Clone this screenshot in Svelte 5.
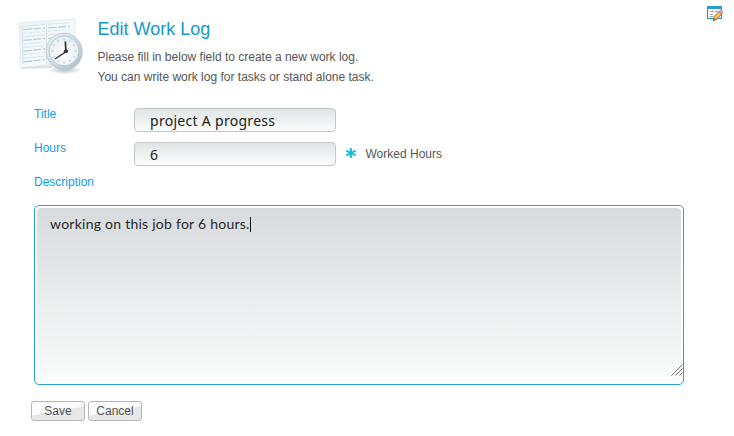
<script>
  let title = $state('project A progress');
  let hours = $state('6');
  const rows = [0, 1, 2, 3, 4, 5, 6, 7, 8, 9, 10];
  const ticks = [0, 30, 60, 90, 120, 150, 180, 210, 240, 270, 300, 330];
</script>

<main>
  <header>
    <svg class="clock" width="68" height="58" viewBox="0 0 68 58">
      <defs>
        <linearGradient id="sheet" x1="0" y1="0" x2="1" y2="1">
          <stop offset="0" stop-color="#edf4f8" />
          <stop offset="1" stop-color="#fbfdfe" />
        </linearGradient>
        <linearGradient id="rim" x1="0" y1="0" x2="1" y2="1">
          <stop offset="0" stop-color="#eaf2f6" />
          <stop offset=".5" stop-color="#d0dde5" />
          <stop offset="1" stop-color="#a5b9c6" />
        </linearGradient>
        <radialGradient id="face" cx=".5" cy=".6" r=".6">
          <stop offset="0" stop-color="#ffffff" />
          <stop offset="1" stop-color="#e3edf3" />
        </radialGradient>
        <radialGradient id="shade">
          <stop offset="0" stop-color="#a6b1b8" stop-opacity=".8" />
          <stop offset="1" stop-color="#a6b1b8" stop-opacity="0" />
        </radialGradient>
      </defs>
      <path d="M2 49.500L34 47V50L4 51Z" fill="#dce1e4" />
      <path d="M1.500 5L57 1V44L2.500 49.500Z" fill="url(#sheet)" stroke="#d9e5ec" stroke-width=".8" />
      {#each rows as r}
        <path d="M5 {8 + r * 3.6}L27 {6.5 + r * 3.5}M30 {6.3 + r * 3.5}L52 {4.8 + r * 3.4}"
          stroke={r % 3 === 1 ? '#b7d0de' : '#d0e1ea'} stroke-width={r % 3 === 1 ? 1.3 : 0.8}
          stroke-dasharray={r % 3 === 1 ? '9 1 8 2' : r % 3 === 2 ? '4 1.5 7 1' : 'none'} />
      {/each}
      <path d="M28.500 5V46M4 7L5 46" stroke="#d4e2ea" />
      <ellipse cx="47" cy="52" rx="17" ry="4.500" fill="url(#shade)" />
      <circle cx="46.600" cy="34.200" r="18" fill="#b4c4cf" />
      <circle cx="46" cy="33.200" r="18" fill="url(#rim)" stroke="#b2c5d0" stroke-width=".7" />
      <circle cx="46" cy="32.900" r="14.900" fill="url(#face)" stroke="#b2c5d0" stroke-width=".9" />
      {#each ticks as t}
        <path d="M46 20V22.400" stroke="#b5c0c7" stroke-width=".8" transform="rotate({t} 46 32.9)" />
      {/each}
      <path d="M48 33L47.300 23.500" stroke="#303a41" stroke-width="1.800" />
      <path d="M50 32.300L37 41" stroke="#303a41" stroke-width="1.400" />
      <circle cx="47.800" cy="33.300" r="2" fill="#303a41" />
    </svg>
    <div class="intro">
      <h1>Edit Work Log</h1>
      <p class="one">Please fill in below field to create a new work log.</p>
      <p class="two">You can write work log for tasks or stand alone task.</p>
    </div>
    <svg class="edit" width="18" height="18" viewBox="0 0 18 18">
      <rect x="1.500" y="1.500" width="14" height="12" fill="#fff" stroke="#2789b8" />
      <path d="M1 2.500H16" stroke="#2d9bd0" stroke-width="3" />
      <path d="M3.500 6.500H8M3.500 9.500H7M9 6.500H12M3.500 11.500H7" stroke="#a2a9ad" />
      <path d="M7.500 15.500L8 11.500L13 6.500L15.800 9.200L11 14.200Z" fill="#eda64c" stroke="#9c6530" stroke-width=".8" />
      <path d="M9.500 12.500L14 8" stroke="#ffdb78" stroke-width="1.200" />
      <path d="M12.600 6.700L14.300 5.200Q15.300 5 16.600 6.500Q17.300 7.600 15.700 9.200Z" fill="#df9fae" stroke="#ad7083" stroke-width=".6" />
      <path d="M7.300 15.800L7.700 13.500L9.500 15Z" fill="#594535" />
    </svg>
  </header>

  <div class="row">
    <label for="title">Title</label>
    <input id="title" bind:value={title} />
  </div>
  <div class="row">
    <label for="hours">Hours</label>
    <input id="hours" bind:value={hours} />
    <svg class="star" width="12" height="12" viewBox="0 0 12 12">
      <path d="M6 1V11M1.300 3.600L10.700 8.400M1.300 8.400L10.700 3.600" stroke="#18bfd2" stroke-width="1.900" />
    </svg>
    <span class="hint">Worked Hours</span>
  </div>
  <div class="desc">Description</div>

  <div class="area">
    <div class="fill">
      <span class="typed">working on this job for 6 hours.</span><i class="caret"></i>
    </div>
    <svg class="grip" width="12" height="12" viewBox="0 0 12 12">
      <path d="M0.500 11.500L11.500 .5M4.500 11.500L11.500 4.500M8.500 11.500L11.500 8.500" stroke="#777" />
    </svg>
  </div>

  <div class="buttons">
    <button>Save</button>
    <button>Cancel</button>
  </div>
</main>

<style>
  :global(body) { background: #fff; }
  main {
    box-sizing: border-box;
    width: 734px;
    height: 436px;
    overflow: hidden;
    font: 12px/20px "Liberation Sans", Arial, sans-serif;
    color: #555;
  }
  header { display: flex; height: 104px; align-items: flex-start; }
  .clock { margin: 18px 0 0 18px; flex: none; }
  .intro { flex: 1; padding: 17px 0 0 11.5px; white-space: nowrap; }
  h1 { margin: 0; font-size: 18px; line-height: 24px; font-weight: 400; color: #1699cb; }
  p { margin: 0; }
  .one { padding-top: 6px; }
  .edit { margin: 5px 10px 0 0; flex: none; }
  .row { display: flex; height: 34px; padding: 4px 0 0 34px; box-sizing: border-box; align-items: flex-start; }
  label { width: 100px; line-height: 12px; color: #109cf0; }
  input {
    box-sizing: border-box;
    width: 202px;
    height: 24px;
    margin: 0;
    padding: 1px 15px 0;
    border: 1px solid #c3c7c8;
    border-radius: 4px;
    outline: none;
    background: linear-gradient(#e0e5e6, #fafcfb);
    color: #222;
    font: 14px "Noto Sans", sans-serif;
    letter-spacing: .29px;
  }
  .star { margin: 5px 0 0 9px; }
  .hint { margin: 2px 0 0 8.500px; }
  .desc { height: 33px; padding-left: 34px; line-height: 20px; color: #109cf0; }
  .area {
    position: relative;
    box-sizing: border-box;
    width: 650px;
    height: 180px;
    margin-left: 34px;
    padding: 2px;
    border: 1px solid #2aa1d3;
    border-radius: 5px;
  }
  .fill {
    display: flex;
    box-sizing: border-box;
    height: 174px;
    padding: 7px 0 0 13px;
    border-radius: 4px;
    background: linear-gradient(#d8dbde, #fafcfb);
    color: #282828;
    font: 14px/18px Lato, sans-serif;
  }
  .typed { letter-spacing: .25px; }
  .caret { width: 1px; height: 15px; margin-top: 2px; background: #111; }
  .grip { position: absolute; right: 0; bottom: 8px; }
  .buttons { display: flex; gap: 3px; padding: 16px 0 0 31px; }
  button {
    box-sizing: border-box;
    width: 54px;
    height: 20px;
    padding: 0;
    border: 1px solid #b5b5b5;
    border-radius: 3px;
    background: linear-gradient(170deg, #fff 0, #fafafa 48%, #e7e7e7 52%, #e9e9e9);
    color: #555;
    font: 12px/18px "Liberation Sans", Arial, sans-serif;
  }
</style>
